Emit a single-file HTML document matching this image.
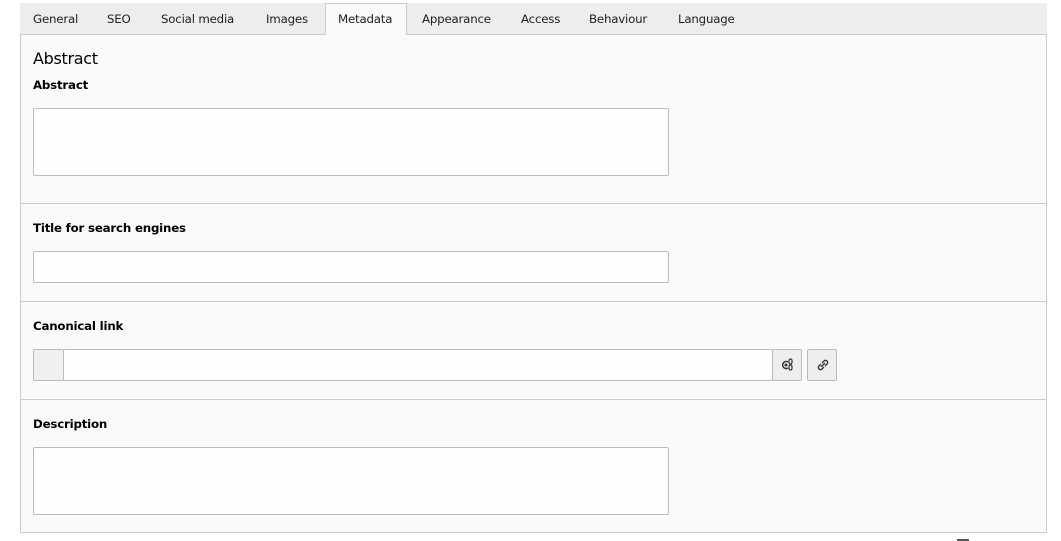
<!DOCTYPE html>
<html><head><style>
body{margin:0;width:1061px;height:541px;background:#fff;font-family:"DejaVu Sans","Liberation Sans",sans-serif;color:#000;position:relative;overflow:hidden}
.a{position:absolute}
.tabs{left:20px;top:3px;width:1027px;height:31px;background:#ededed;border-bottom:1px solid #ccc}
.t{position:absolute;top:12px;font-size:11.8px;color:#222;white-space:nowrap;letter-spacing:-0.2px}
.act{left:325px;top:3px;width:82px;height:32px;background:#fafafa;border:1px solid #ccc;border-bottom:none;box-sizing:border-box}
.panel{left:20px;top:35px;width:1027px;height:498px;background:#fafafa;border:1px solid #ccc;border-top:none;box-sizing:border-box}
.sep{left:20px;width:1027px;height:1px;background:#ccc}
.lbl{font-size:11.8px;font-weight:bold;left:33px;letter-spacing:-0.2px}
.in{background:#fefefe;border:1px solid #bbb;box-sizing:border-box;border-radius:2px}
.btn{background:#eee;border:1px solid #bbb;box-sizing:border-box;border-radius:2px}
</style></head><body>
<div class="a tabs"></div>
<div class="a act"></div>
<div class="t" style="left:33px">General</div>
<div class="t" style="left:107px">SEO</div>
<div class="t" style="left:161px">Social media</div>
<div class="t" style="left:266px">Images</div>
<div class="t" style="left:338px">Metadata</div>
<div class="t" style="left:422px">Appearance</div>
<div class="t" style="left:521px">Access</div>
<div class="t" style="left:589px">Behaviour</div>
<div class="t" style="left:678px">Language</div>
<div class="a panel"></div>
<div class="a" style="left:33px;top:49px;font-size:16px;letter-spacing:-0.3px">Abstract</div>
<div class="a lbl" style="top:78px">Abstract</div>
<div class="a in" style="left:33px;top:108px;width:636px;height:68px"></div>
<div class="a sep" style="top:203px"></div>
<div class="a lbl" style="top:221px">Title for search engines</div>
<div class="a in" style="left:33px;top:251px;width:636px;height:32px"></div>
<div class="a sep" style="top:301px"></div>
<div class="a lbl" style="top:319px">Canonical link</div>
<div class="a btn" style="left:33px;top:349px;width:31px;height:32px;background:#f0f0f0"></div>
<div class="a in" style="left:63px;top:349px;width:710px;height:32px"></div>
<div class="a btn" style="left:772px;top:349px;width:30px;height:32px"><svg width="30" height="30" viewBox="0 0 30 30"><path d="M15 12a3.5 3.5 0 1 0 0 6" fill="none" stroke="#333" stroke-width="1.5"/><circle cx="13" cy="15" r="1.5" fill="#333"/><rect x="16" y="9" width="3" height="5" rx="1.5" fill="none" stroke="#333" stroke-width="1.2"/><rect x="16" y="15" width="3" height="5" rx="1.5" fill="none" stroke="#333" stroke-width="1.2"/></svg></div>
<div class="a btn" style="left:807px;top:349px;width:30px;height:32px"><svg width="30" height="30" viewBox="0 0 30 30"><path d="M13 17l4-4M14 13l2-2a2 2 0 0 1 3 3l-2 2M16 17l-2 2a2 2 0 0 1-3-3l2-2" fill="none" stroke="#333" stroke-width="1.4"/></svg></div>
<div class="a sep" style="top:399px"></div>
<div class="a lbl" style="top:417px">Description</div>
<div class="a in" style="left:33px;top:447px;width:636px;height:68px"></div>
<div class="a" style="left:957px;top:539px;width:12px;height:2px;background:#555"></div>
</body></html>
